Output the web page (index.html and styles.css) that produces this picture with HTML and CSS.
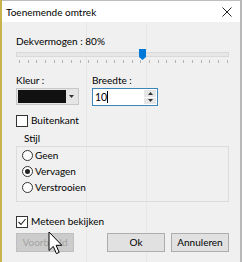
FILE: index.html
```html
<!DOCTYPE html>
<html lang="nl">
  <head>
    <meta charset="UTF-8" />
    <title>Toenemende omtrek</title>
    <link rel="stylesheet" href="styles.css">
  </head>
  <body>
    <div class="window">
      <div class="titlebar">
        <span>Toenemende omtrek</span>
        <svg class="close" width="10" height="10" viewBox="0 0 10 10">
          <path d="M0.5 0.5 L9.5 9.5 M9.5 0.5 L0.5 9.5" stroke="#222" stroke-width="1" />
        </svg>
      </div>

      <div class="content">
        <div class="label">Dekvermogen : 80%</div>
        <div class="slider">
          <div class="track"></div>
          <svg class="thumb" width="7" height="11" viewBox="0 0 7 11">
            <path d="M0 0 H7 V8 L3.5 11 L0 8 Z" fill="#0078d7" />
          </svg>
        </div>
        <div class="ticks" id="ticks"></div>

        <div class="fields">
          <div class="field">
            <div class="label">Kleur :</div>
            <div class="combo">
              <div class="swatch"></div>
              <div class="combo-arrow">
                <svg width="5" height="3" viewBox="0 0 5 3"><path d="M0 0 H5 L2.5 3 Z" fill="#333" /></svg>
              </div>
            </div>
          </div>
          <div class="field">
            <div class="label">Breedte :</div>
            <div class="spin">
              <span class="spin-value">10<i class="caret"></i></span>
              <div class="spin-buttons">
                <div class="spin-btn"><svg width="5" height="3" viewBox="0 0 5 3"><path d="M0 3 H5 L2.5 0 Z" fill="#333" /></svg></div>
                <div class="spin-btn"><svg width="5" height="3" viewBox="0 0 5 3"><path d="M0 0 H5 L2.5 3 Z" fill="#333" /></svg></div>
              </div>
            </div>
          </div>
        </div>

        <label class="check">
          <span class="box"></span>
          Buitenkant
        </label>

        <div class="group-title">Stijl</div>
        <div class="group">
          <label class="radio"><span class="dot"></span>Geen</label>
          <label class="radio"><span class="dot on"></span>Vervagen</label>
          <label class="radio"><span class="dot"></span>Verstrooien</label>
        </div>

        <label class="check preview">
          <span class="box">
            <svg width="10" height="10" viewBox="0 0 10 10"><path d="M1.5 5 L4 7.5 L8.5 2" fill="none" stroke="#222" stroke-width="1.1" /></svg>
          </span>
          Meteen bekijken
        </label>

        <div class="buttons">
          <button class="btn disabled">Voorbeeld</button>
          <button class="btn ok">Ok</button>
          <button class="btn">Annuleren</button>
        </div>
      </div>

      <!-- muiscursor boven de knop -->
      <svg class="cursor" width="15" height="25" viewBox="0 0 15 25">
        <path d="M1 1 L1 19.5 L5.3 15.4 L8.4 22.6 L11.2 21.4 L8.1 14.3 L13.8 14.3 Z" fill="#fff" stroke="#000" stroke-width="1" stroke-linejoin="round" />
      </svg>
    </div>

    <script>
      // streepjes onder de schuifregelaar
      const ticks = document.getElementById("ticks");
      for (let i = 0; i < 25; i++) {
        ticks.appendChild(document.createElement("span"));
      }
    </script>
  </body>
</html>
```

FILE: styles.css
```css
* {
  box-sizing: border-box;
}

body {
  margin: 0;
  font-family: Lato, "Noto Sans", sans-serif;
  font-size: 10px;
  color: #000;
}

.window {
  position: relative;
  width: 242px;
  height: 262px;
  border-left: 2px solid #c9b34c;
  border-right: 2px solid #b8b8b8;
  background-color: #f0f0f0;
  display: flex;
  flex-direction: column;
  overflow: hidden;
}

.titlebar {
  height: 22px;
  background-color: #fff;
  border-top: 1px solid #bdbdbd;
  display: flex;
  align-items: center;
  justify-content: space-between;
  padding: 0 8px 0 4px;
  font-size: 10px;
}

.close {
  display: block;
}

.content {
  flex: 1;
  padding: 12px 11px 0 14px;
  display: flex;
  flex-direction: column;
  background-image: linear-gradient(to right, transparent 84px, #e7e7e7 84px, #e7e7e7 85px, transparent 85px, transparent 144px, #e8e8e8 144px, #e8e8e8 145px, transparent 145px);
}

.label {
  line-height: 14px;
  height: 14px;
}

.slider {
  position: relative;
  height: 12px;
  display: flex;
  align-items: center;
}

.track {
  width: 100%;
  height: 5px;
  background-color: #e7e7e7;
  border: 1px solid #d9d9d9;
}

.thumb {
  position: absolute;
  left: 123px;
  top: 1px;
}

.ticks {
  display: flex;
  justify-content: space-between;
  padding: 0 1px 0 3px;
  height: 3px;
}

.ticks span {
  width: 1px;
  height: 3px;
  background-color: #b5b5b5;
}

.fields {
  display: flex;
  gap: 13px;
  margin-top: 10px;
}

.field {
  display: flex;
  flex-direction: column;
  gap: 1px;
}

.combo {
  width: 63px;
  height: 17px;
  border: 1px solid #c8c8c8;
  background-color: #e5e5e5;
  display: flex;
  padding: 1px;
}

.swatch {
  width: 48px;
  background-color: #111;
}

.combo-arrow {
  flex: 1;
  display: flex;
  align-items: center;
  justify-content: center;
}

.combo-arrow svg,
.spin-btn svg {
  display: block;
}

.spin {
  width: 66px;
  height: 18px;
  border: 1px solid #3c86b8;
  background-color: #fff;
  display: flex;
  align-items: center;
  padding-left: 2px;
  font-size: 10.5px;
}

.spin-value {
  flex: 1;
  line-height: 14px;
  display: flex;
  align-items: center;
}

.caret {
  display: inline-block;
  width: 1px;
  height: 12px;
  background-color: #000;
}

.spin-buttons {
  width: 12px;
  height: 14px;
  margin-right: 1px;
  display: flex;
  flex-direction: column;
  gap: 1px;
}

.spin-btn {
  flex: 1;
  background-color: #e6e6e6;
  display: flex;
  align-items: center;
  justify-content: center;
}

.check {
  display: flex;
  align-items: center;
  gap: 3px;
  height: 13px;
  margin-top: 8px;
  line-height: 13px;
}

.box {
  width: 12px;
  height: 12px;
  border: 1px solid #333;
  background-color: #fff;
  display: flex;
  align-items: center;
  justify-content: center;
}

.group-title {
  margin: 4px 0 0 8px;
  line-height: 14px;
  height: 14px;
}

.group {
  margin-top: 1px;
  padding: 1px 0 0 5px;
  border: 1px solid #dcdcdc;
  height: 56px;
  display: flex;
  flex-direction: column;
  gap: 2px;
}

.radio {
  display: flex;
  align-items: center;
  gap: 2px;
  height: 14px;
  line-height: 14px;
}

.dot {
  width: 11px;
  height: 11px;
  border: 1px solid #333;
  border-radius: 50%;
  background-color: #fff;
  display: flex;
  align-items: center;
  justify-content: center;
}

.dot.on::after {
  content: "";
  width: 5px;
  height: 5px;
  border-radius: 50%;
  background-color: #222;
}

.preview {
  margin-top: 13px;
}

.buttons {
  display: flex;
  gap: 6px;
  margin-top: 5px;
}

.btn {
  width: 58px;
  height: 19px;
  font-family: inherit;
  font-size: 10px;
  line-height: 15px;
  padding: 0;
  color: #000;
  background-color: #e1e1e1;
  border: 1px solid #adadad;
}

.btn.ok {
  margin-left: auto;
}

.btn.disabled {
  color: #a3a3a3;
  background-color: #cccccc;
  border-color: #bfbfbf;
}

.cursor {
  position: absolute;
  left: 46px;
  top: 231px;
}
```
